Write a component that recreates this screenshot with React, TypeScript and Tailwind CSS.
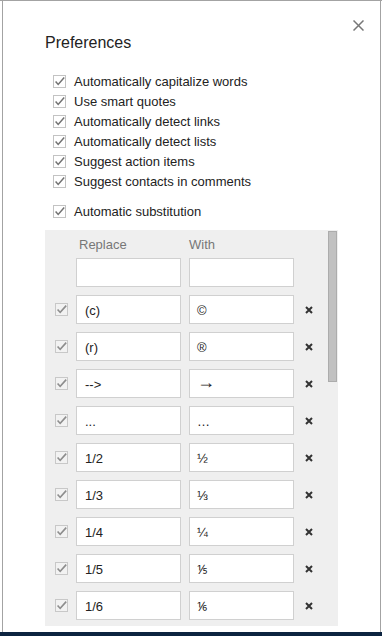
import React from "react";

function TopCheck() {
  return (
    <svg width="14" height="14" viewBox="0 0 14 14" className="shrink-0">
      <rect x="0.5" y="0.5" width="12" height="12" fill="#ffffff" stroke="#c3c3c3" />
      <path d="M2.6 6.4 L5.2 9.4 L11.2 2.6" fill="none" stroke="#727272" strokeWidth="1.5" />
    </svg>
  );
}

function PanelCheck() {
  return (
    <svg width="14" height="14" viewBox="0 0 14 14" className="shrink-0">
      <rect x="0.5" y="0.5" width="12" height="12" fill="#f2f2f2" stroke="#c8c8c8" />
      <path d="M2.6 6.4 L5.2 9.4 L11.2 2.6" fill="none" stroke="#8d8d8d" strokeWidth="1.6" />
    </svg>
  );
}

function BoldX() {
  return (
    <svg width="8" height="8" viewBox="0 0 8 8" className="shrink-0">
      <path d="M1 1 L7 7 M7 1 L1 7" stroke="#333333" strokeWidth="2" />
    </svg>
  );
}

const opts = [
  "Automatically capitalize words",
  "Use smart quotes",
  "Automatically detect links",
  "Automatically detect lists",
  "Suggest action items",
  "Suggest contacts in comments",
];

const rows: [string, string][] = [
  ["", ""],
  ["(c)", "©"],
  ["(r)", "®"],
  ["-->", "→"],
  ["...", "…"],
  ["1/2", "½"],
  ["1/3", "⅓"],
  ["1/4", "¼"],
  ["1/5", "⅕"],
  ["1/6", "⅙"],
];

export default function App() {
  return (
    <div className="w-[382px] h-[636px] bg-white flex flex-col overflow-hidden font-['Liberation_Sans',Arial,sans-serif] text-[#222222]">
      <div className="h-px bg-[#a3a3a3] shrink-0" />
      <div className="flex-1 flex min-h-0 pl-[2px] pr-[1px]">
        <div className="flex-1 relative flex flex-col min-h-0 border-l border-r border-[#a3a3a3] pl-[42px] pt-[32px] pb-[6px]">
          <svg
            width="11"
            height="11"
            viewBox="0 0 11 11"
            className="absolute left-[350px] top-[19px]"
          >
            <path d="M0.5 0.5 L10.5 10.5 M10.5 0.5 L0.5 10.5" stroke="#777777" strokeWidth="1.5" />
          </svg>

          <div className="text-[16px] leading-[20px]">Preferences</div>

          <div className="mt-[19px] flex flex-col pl-[8px]">
            {opts.map((o) => (
              <div key={o} className="h-[20px] flex items-center gap-[7px] text-[13px]">
                <TopCheck />
                <span>{o}</span>
              </div>
            ))}
            <div className="mt-[10px] h-[20px] flex items-center gap-[7px] text-[13px]">
              <TopCheck />
              <span>Automatic substitution</span>
            </div>
          </div>

          <div className="mt-[8px] w-[293px] flex-1 min-h-0 bg-[#efefef] relative overflow-hidden pt-[7px]">
            <div className="absolute right-[1px] top-[1px] w-[9px] h-[151px] bg-[#c1c1c1] border border-[#acacac]" />
            <div className="h-[16px] flex text-[13px] leading-[16px] text-[#777777]">
              <span className="ml-[34px] w-[110px]">Replace</span>
              <span>With</span>
            </div>
            <div className="mt-[5px] flex flex-col gap-[8px]">
              {rows.map(([a, b], i) => (
                <div key={i} className="h-[29px] flex items-center pl-[10px]">
                  <div className={i === 0 ? "invisible" : ""}>
                    <PanelCheck />
                  </div>
                  <div className="ml-[7px] w-[105px] h-[29px] bg-white border border-[#d0d0d0] flex items-center pl-[8px] pt-[2px] text-[13px]">
                    {a}
                  </div>
                  <div className="ml-[8px] w-[105px] h-[29px] bg-white border border-[#d0d0d0] flex items-center pl-[7px] pt-[2px] text-[13px]">
                    {b === "→" ? (
                      <span className="text-[18px] leading-none -translate-y-[3px]">→</span>
                    ) : (
                      b
                    )}
                  </div>
                  <div className={"ml-[11px] " + (i === 0 ? "invisible" : "")}>
                    <BoldX />
                  </div>
                </div>
              ))}
            </div>
          </div>
        </div>
      </div>
      <div className="h-[4px] bg-[#0c2440] shrink-0" />
    </div>
  );
}
